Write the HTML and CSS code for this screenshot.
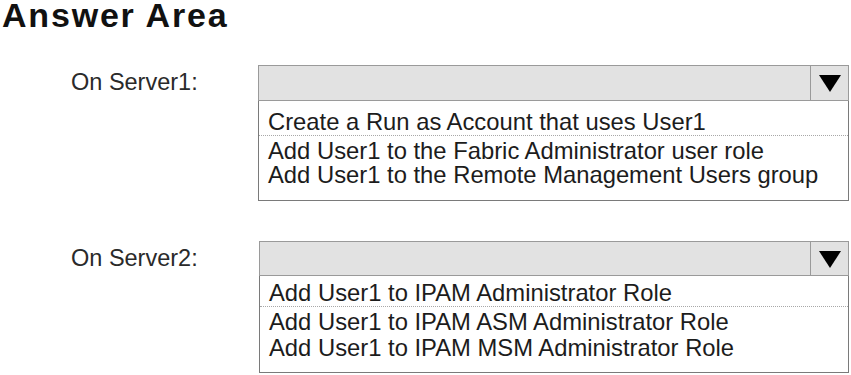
FILE: index.html
```html
<!DOCTYPE html>
<html>
	<head>
		<meta charset="utf-8">
		<title>Answer Area</title>
		<link rel="stylesheet" href="styles.css">
	</head>
	<body>
		<h1 class="title">Answer Area</h1>
		<div class="row row-first">
			<div class="label">On Server1:</div>
			<div class="drop">
				<div class="head">
					<span class="btn"><svg width="22" height="17" viewBox="0 0 22 17"><polygon points="0,0 22,0 11,17" fill="#000"/></svg></span>
				</div>
				<ul class="list list-one">
					<li class="sep">Create a Run as Account that uses User1</li>
					<li>Add User1 to the Fabric Administrator user role</li>
					<li>Add User1 to the Remote Management Users group</li>
				</ul>
			</div>
		</div>
		<div class="row row-second">
			<div class="label">On Server2:</div>
			<div class="drop drop-two">
				<div class="head head-two">
					<span class="btn"><svg width="22" height="17" viewBox="0 0 22 17"><polygon points="0,0 22,0 11,17" fill="#000"/></svg></span>
				</div>
				<ul class="list list-two">
					<li class="sep">Add User1 to IPAM Administrator Role</li>
					<li>Add User1 to IPAM ASM Administrator Role</li>
					<li>Add User1 to IPAM MSM Administrator Role</li>
				</ul>
			</div>
		</div>
	</body>
</html>
```

FILE: styles.css
```css
* {
  padding: 0;
  margin: 0;
  list-style: none;
  box-sizing: border-box;
}

body {
  background: #fff;
  font-family: "Liberation Sans", Arial, sans-serif;
  color: #1c1c1c;
}

.title {
  font-size: 34px;
  font-weight: bold;
  line-height: 31px;
  letter-spacing: 1.8px;
  padding-left: 2px;
  color: #111;
}

.row {
  display: grid;
  grid-template-columns: 258px 591px;
  align-items: start;
}

.row-first {
  margin-top: 34px;
}

.row-second {
  margin-top: 40px;
}

.label {
  padding-left: 71px;
  font-size: 23.5px;
  line-height: 34px;
  color: #2a2a2a;
}

.drop-two {
  margin-left: 1px;
  width: 590px;
}

.head {
  height: 36px;
  background: #e2e2e2;
  border: 1px solid #9a9a9a;
  display: flex;
  justify-content: flex-end;
}

.head-two {
  height: 35px;
}

.btn {
  width: 38px;
  border-left: 1px solid #9a9a9a;
  display: flex;
  align-items: center;
  justify-content: center;
  padding-top: 1px;
}

.list {
  border: 1px solid #7a7a7a;
  border-top: 0;
  font-size: 23.8px;
  line-height: 24px;
  padding-left: 9px;
}

.list-one {
  height: 100px;
  padding-top: 9px;
}

.list-one .sep {
  margin-bottom: 3px;
}

.list-two {
  height: 97px;
  padding-top: 5px;
}

.list-two li {
  line-height: 26px;
}

.list-two .sep {
  line-height: 24px;
  margin-bottom: 2px;
}

.list .sep {
  border-bottom: 1px dotted #a8a8a8;
  margin-left: -9px;
  padding-left: 9px;
  padding-bottom: 1px;
}
```
